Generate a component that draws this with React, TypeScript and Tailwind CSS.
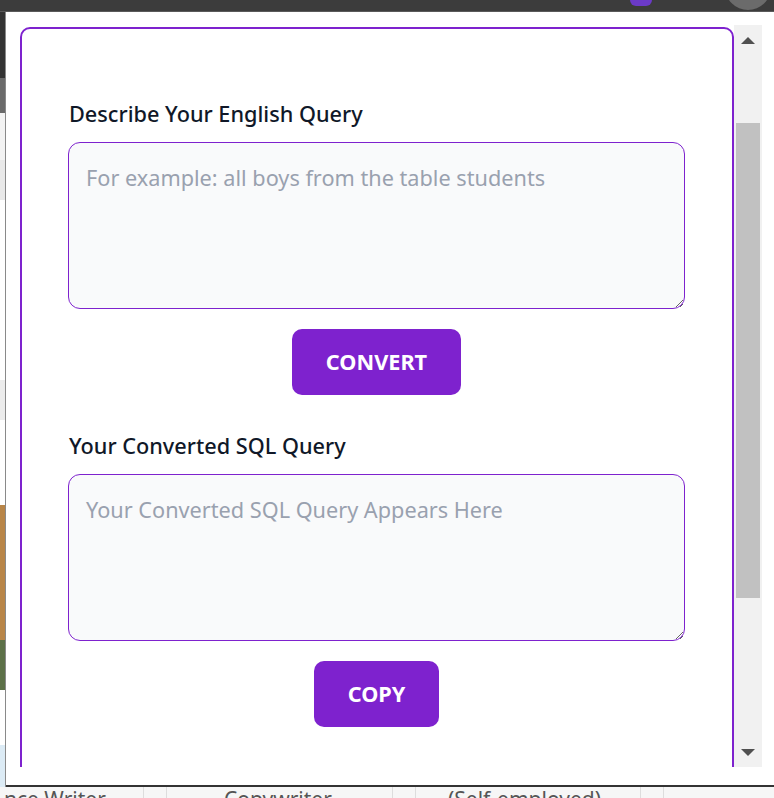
import React from "react";

const font = { fontFamily: '"Noto Sans", "Open Sans", sans-serif' };

function Field({ label, placeholder }: { label: string; placeholder: string }) {
  return (
    <div className="flex flex-col">
      <label className="text-[21.7px] leading-[28px] font-medium text-gray-900 mb-[14px] pl-[1px]">{label}</label>
      <textarea
        placeholder={placeholder}
        className="w-full h-[167px] rounded-xl border border-[#7e22ce] bg-gray-50 px-[17px] pt-[21px] text-[21.7px] leading-[28px] text-gray-800 placeholder:text-gray-400 outline-none"
      />
    </div>
  );
}

function ActionButton({ children }: { children: React.ReactNode }) {
  return (
    <div className="flex justify-center mt-5">
      <button className="h-[66px] px-[34px] rounded-[10px] bg-[#7e22ce] text-white text-[21.7px] font-bold uppercase">
        {children}
      </button>
    </div>
  );
}

function Scrollbar() {
  return (
    <div className="w-[28px] bg-[#f1f1f1] flex flex-col items-center">
      <div className="h-[28px] flex items-center justify-center pt-[2px]">
        <div className="w-0 h-0 border-l-[7px] border-r-[7px] border-b-[7px] border-l-transparent border-r-transparent border-b-[#505050]" />
      </div>
      <div className="mt-[70px] w-[24px] h-[475px] bg-[#c1c1c1]" />
      <div className="flex-1" />
      <div className="h-[28px] flex items-center justify-center pb-[2px]">
        <div className="w-0 h-0 border-l-[7px] border-r-[7px] border-t-[7px] border-l-transparent border-r-transparent border-t-[#505050]" />
      </div>
    </div>
  );
}

function LeftStrip() {
  return (
    <div className="w-[6px] flex flex-col border-r border-[#8a8a8a]">
      <div className="h-[66px] bg-[#333333]" />
      <div className="h-[35px] bg-[#6a6a6a]" />
      <div className="h-[47px] bg-[#f3f3f3]" />
      <div className="h-[40px] bg-[#e9e9e9]" />
      <div className="h-[85px] bg-white" />
      <div className="h-[95px] bg-white" />
      <div className="h-[40px] bg-[#ececec]" />
      <div className="h-[85px] bg-white" />
      <div className="h-[135px] bg-[#b88548]" />
      <div className="h-[50px] bg-[#5c7048]" />
      <div className="h-[55px] bg-white" />
      <div className="flex-1 bg-[#dcebf5]" />
    </div>
  );
}

export default function App() {
  return (
    <div className="w-[774px] h-[798px] overflow-hidden flex flex-col bg-[#f6f6f6]" style={font}>
      {/* browser bar behind the popup */}
      <div className="h-[12px] bg-[#3c3c3c] border-b border-[#5a5a5a] flex overflow-hidden">
        <div className="ml-[630px] w-[22px] h-[6px] rounded-b-md bg-[#6b3ac8]" />
        <div className="ml-[73px] -mt-[36px] w-[46px] h-[46px] rounded-full bg-[#6b6b6b]" />
      </div>

      <div className="flex h-[775px]">
        <LeftStrip />
        {/* popup */}
        <div className="flex-1 bg-white border-b-2 border-[#333333] pl-[14px] pt-[13px] pr-[12px] pb-[18px] flex flex-col">
          <div className="flex flex-1 overflow-hidden">
            <div className="flex-1 overflow-hidden">
              <div className="mt-[2px] border-2 border-[#7e22ce] rounded-t-[10px] pl-[46px] pr-[47px] pt-[71px] pb-10 h-[800px]">
                <Field label="Describe Your English Query" placeholder="For example: all boys from the table students" />
                <ActionButton>Convert</ActionButton>
                <div className="mt-[37px]">
                  <Field label="Your Converted SQL Query" placeholder="Your Converted SQL Query Appears Here" />
                </div>
                <ActionButton>Copy</ActionButton>
              </div>
            </div>
            <Scrollbar />
          </div>
        </div>
      </div>

      {/* page table behind the popup */}
      <div className="flex-1 flex text-[21px] leading-[26px] text-[#555555] overflow-hidden">
        <div className="w-[143px] pl-[4px] -mt-[1px] whitespace-nowrap overflow-hidden">nce Writer</div>
        <div className="w-[24px] border-x border-[#dddddd]" />
        <div className="w-[225px] pl-[57px] -mt-[1px] whitespace-nowrap">Copywriter</div>
        <div className="w-[24px] border-x border-[#dddddd]" />
        <div className="w-[224px] pl-[32px] -mt-[1px] whitespace-nowrap">(Self-employed)</div>
        <div className="w-[24px] border-x border-[#dddddd]" />
      </div>
    </div>
  );
}
